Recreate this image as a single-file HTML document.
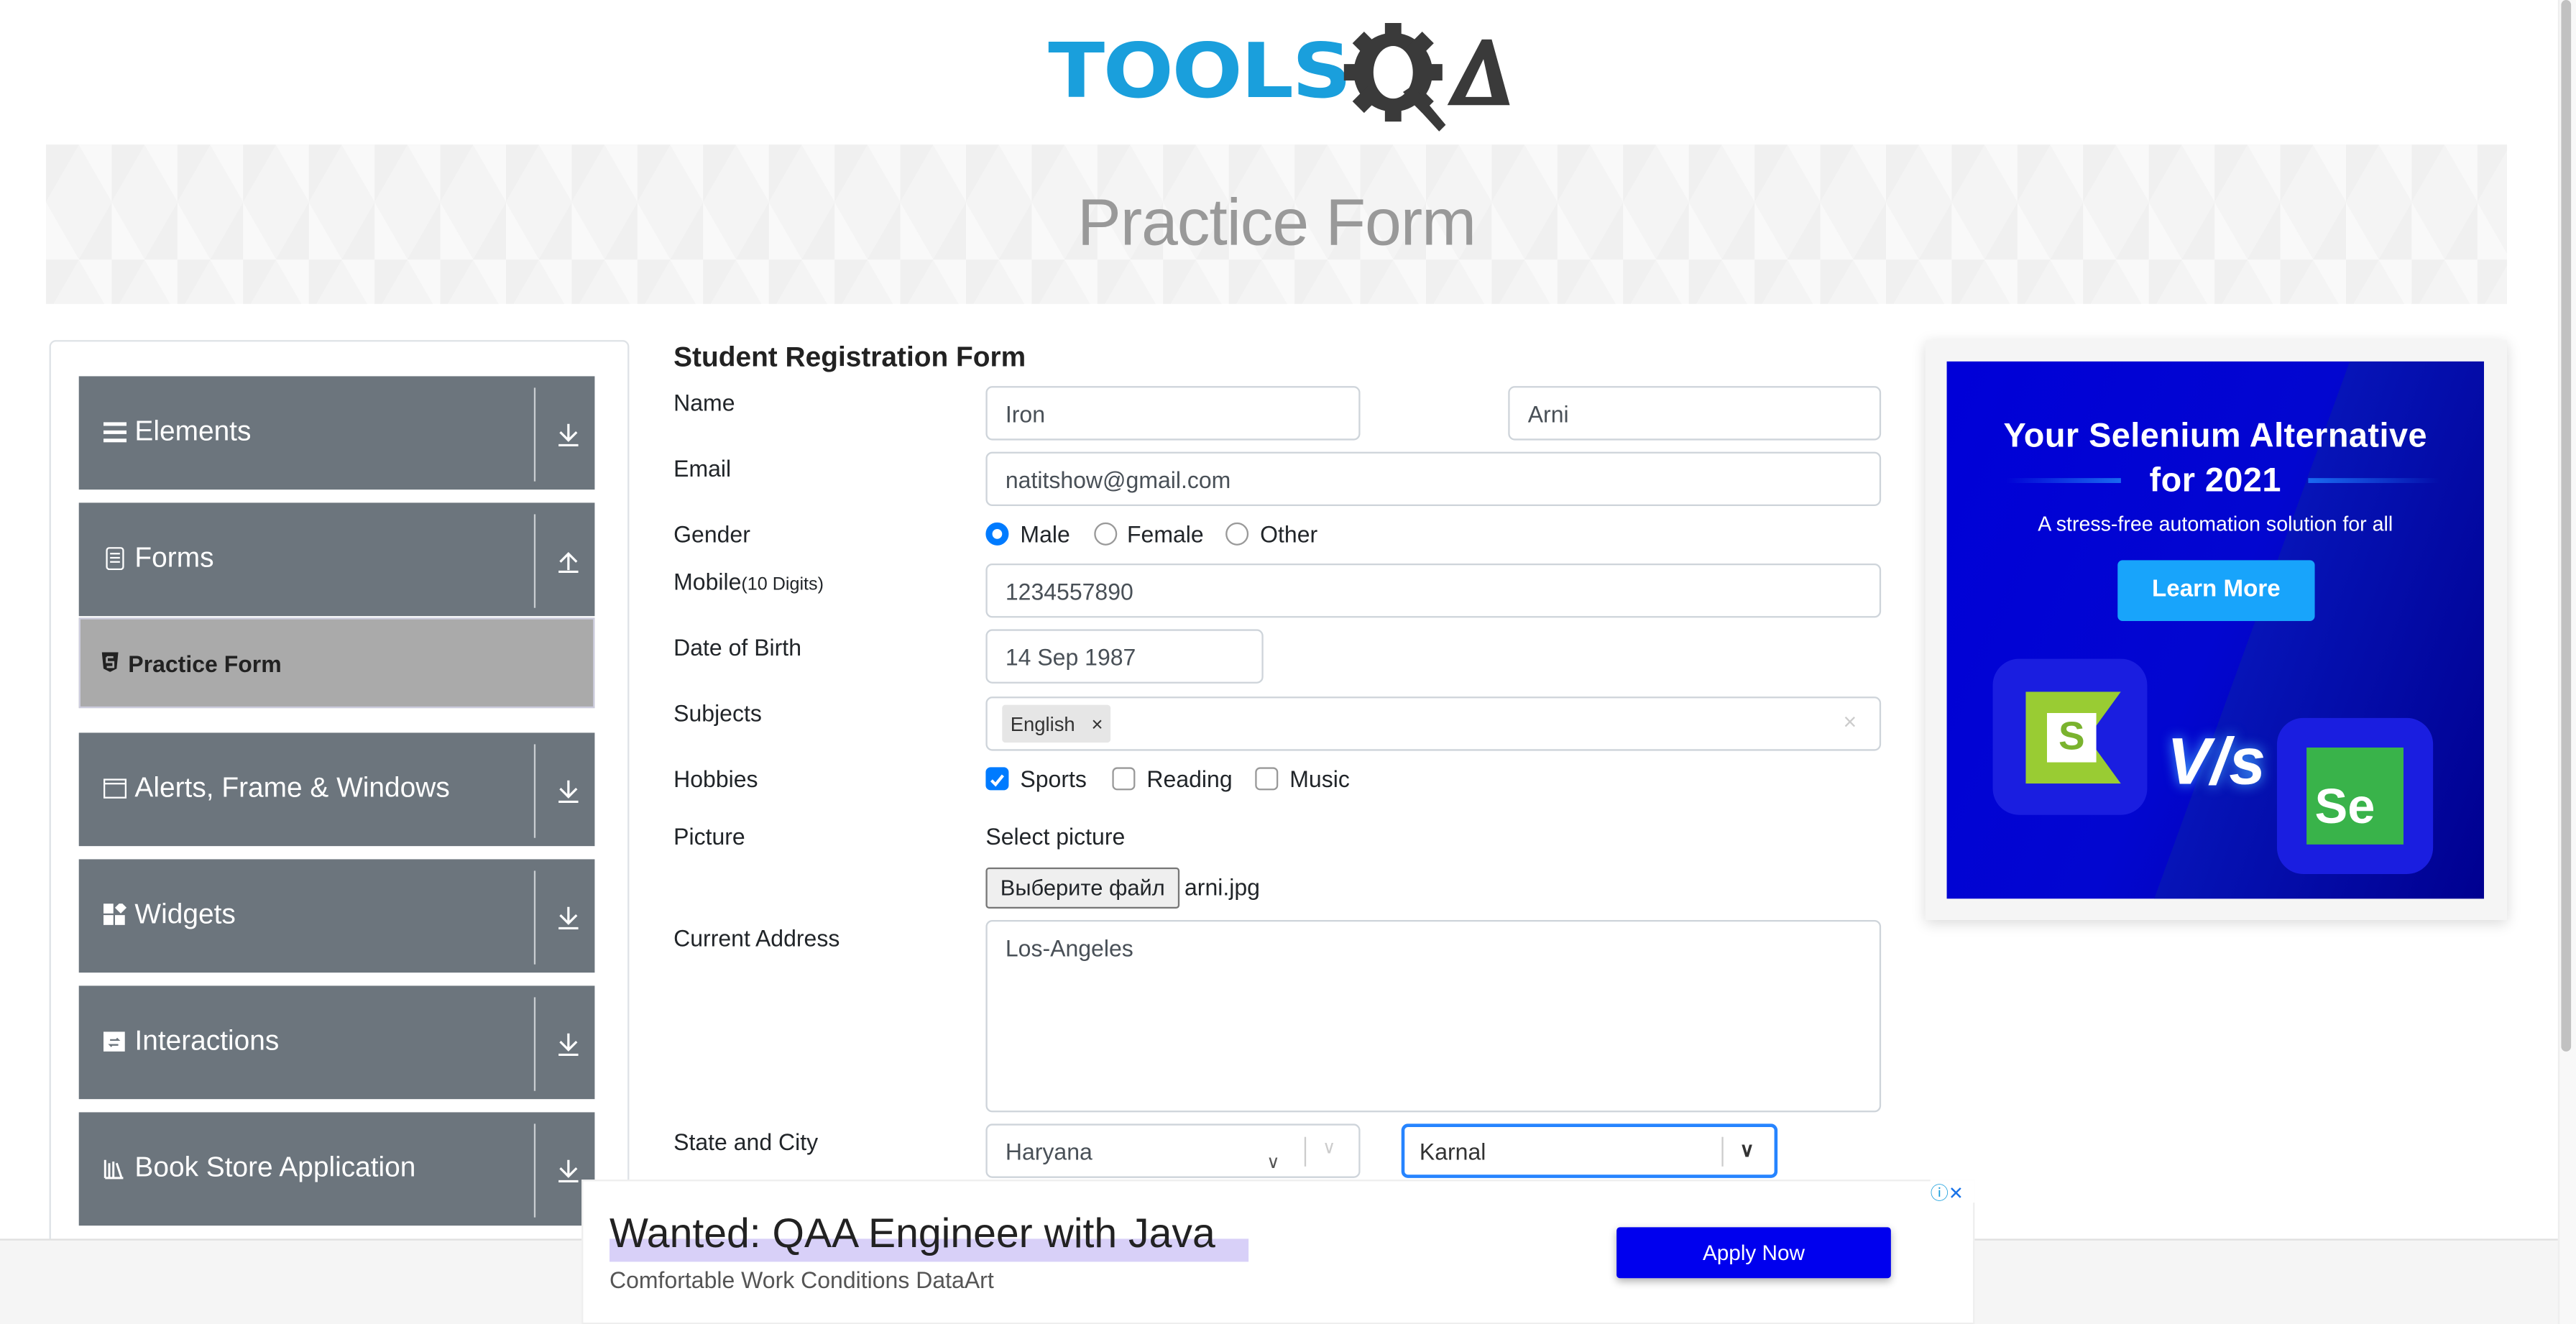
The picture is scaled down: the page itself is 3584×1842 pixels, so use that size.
<!DOCTYPE html>
<html><head><meta charset="utf-8">
<style>
*{box-sizing:border-box;margin:0;padding:0}
html,body{width:3584px;height:1842px;overflow:hidden;background:#fff}
#w{position:absolute;left:0;top:0;width:1568px;height:806px;transform:scale(2.2857);transform-origin:0 0;font-family:"Liberation Sans",sans-serif;color:#212529}
.a{position:absolute}
.banner{left:28px;top:88px;width:1498px;height:97px;background:#f4f4f4;background-image:linear-gradient(60deg,rgba(255,255,255,.45) 25%,transparent 25%,transparent 75%,rgba(255,255,255,.45) 75%),linear-gradient(-60deg,rgba(236,236,236,.5) 25%,transparent 25%,transparent 75%,rgba(236,236,236,.5) 75%);background-size:40px 70px}
.banner h1{text-align:center;font-weight:400;font-size:40px;color:#999;line-height:97px;letter-spacing:-.5px}
.side{left:30px;top:207px;width:353px;height:560px;border:1px solid #dee2e6;border-radius:4px}
.it{position:absolute;left:48px;width:314px;height:69px;background:#6c757d;color:#fff;font-size:17px}
.it span.t{position:absolute;left:34px;top:24px}
.it .ic{position:absolute;left:15px;top:27px;width:14px;height:14px}
.it .sep{position:absolute;left:277px;top:7px;width:1px;height:57px;background:#c9cdd1}
.it .ar{position:absolute;left:291px;top:27px;width:14px;height:16px}
.lbl{position:absolute;left:410px;font-size:14px}
.in{position:absolute;height:33px;border:1px solid #ced4da;border-radius:4px;font-size:14px;padding:8px 11px;color:#495057;background:#fff}
.rb{position:absolute;width:14px;height:14px;border:1px solid #999;border-radius:50%;background:#fff}
.cb{position:absolute;width:14px;height:14px;border:1px solid #999;border-radius:3px;background:#fff}
.tx{position:absolute;font-size:14px}
</style></head><body><div id="w">
<div class="a" style="left:638px;top:20px;font-family:'DejaVu Sans',sans-serif;font-weight:bold;font-size:46px;color:#1a9fdc;letter-spacing:-1px;line-height:46px;transform:scaleX(1.1);transform-origin:0 0">TOOLS</div>
<svg class="a" style="left:818px;top:14px" width="102" height="66" viewBox="0 0 102 66">
<g fill="#3a3a3a"><circle cx="30" cy="30" r="24"/>
<rect x="25" y="0" width="10" height="60"/><rect x="0" y="25" width="60" height="10"/>
<rect x="25" y="0" width="10" height="60" transform="rotate(45 30 30)"/><rect x="25" y="0" width="10" height="60" transform="rotate(-45 30 30)"/></g>
<ellipse cx="30" cy="30" rx="12" ry="16" fill="#fff"/>
<path d="M36 42 L58 66 L62 62 L42 38Z" fill="#3a3a3a"/>
<path d="M63 50 L84 10 L90 10 L101 50Z" fill="#3a3a3a"/>
<path d="M74 45 L85 22 L90 45Z" fill="#fff"/>
</svg>
<div class="a banner"><h1>Practice Form</h1></div>
<div class="a side"></div>
<div class="it" style="top:229px"><svg class="ic" viewBox="0 0 14 14"><rect y="1" width="14" height="2.2" fill="#fff"/><rect y="6" width="14" height="2.2" fill="#fff"/><rect y="11" width="14" height="2.2" fill="#fff"/></svg><span class="t">Elements</span><div class="sep"></div><svg class="ar" viewBox="0 0 14 16"><path d="M7 2V12M2 7L7 12L12 7M1 15H13" stroke="#fff" stroke-width="1.4" fill="none"/></svg></div>
<div class="it" style="top:306px"><svg class="ic" viewBox="0 0 14 14"><rect x="2" y="0.5" width="10" height="13" rx="1.5" stroke="#fff" fill="none"/><path d="M4 4H10M4 6.5H10M4 9H10" stroke="#fff"/></svg><span class="t">Forms</span><div class="sep"></div><svg class="ar" viewBox="0 0 14 16"><path d="M7 14V4M2 9L7 4L12 9M1 15H13" stroke="#fff" stroke-width="1.4" fill="none"/></svg></div>
<div class="a" style="left:48px;top:376px;width:314px;height:55px;background:#aaa;border:1px solid #ccd"></div>
<svg class="a" style="left:62px;top:397px" width="10" height="12" viewBox="0 0 10 12"><path d="M0 0H10L9 10L5 12L1 10Z" fill="#222"/><path d="M3 3H7M3 3V6H7V9H3" stroke="#aaa" stroke-width="1.2" fill="none"/></svg>
<div class="a" style="left:78px;top:396px;font-size:14px;font-weight:bold;color:#222">Practice Form</div>
<div class="it" style="top:446px"><svg class="ic" viewBox="0 0 14 14"><rect x="0.5" y="1.5" width="13" height="11" stroke="#fff" fill="none"/><path d="M0.5 4H13.5" stroke="#fff"/></svg><span class="t">Alerts, Frame &amp; Windows</span><div class="sep"></div><svg class="ar" viewBox="0 0 14 16"><path d="M7 2V12M2 7L7 12L12 7M1 15H13" stroke="#fff" stroke-width="1.4" fill="none"/></svg></div>
<div class="it" style="top:523px"><svg class="ic" viewBox="0 0 14 14"><rect x="0" y="7" width="6" height="6" fill="#fff"/><rect x="7" y="7" width="6" height="6" fill="#fff"/><rect x="0" y="0" width="6" height="6" fill="#fff"/><rect x="8" y="0" width="5" height="5" fill="#fff" transform="rotate(45 10.5 2.5)"/></svg><span class="t">Widgets</span><div class="sep"></div><svg class="ar" viewBox="0 0 14 16"><path d="M7 2V12M2 7L7 12L12 7M1 15H13" stroke="#fff" stroke-width="1.4" fill="none"/></svg></div>
<div class="it" style="top:600px"><svg class="ic" viewBox="0 0 14 14"><rect x="0" y="1" width="13" height="12" fill="#fff"/><path d="M4 6H9L8 5M9 9H4L5 10" stroke="#6c757d" fill="none"/></svg><span class="t">Interactions</span><div class="sep"></div><svg class="ar" viewBox="0 0 14 16"><path d="M7 2V12M2 7L7 12L12 7M1 15H13" stroke="#fff" stroke-width="1.4" fill="none"/></svg></div>
<div class="it" style="top:677px"><svg class="ic" viewBox="0 0 14 14"><path d="M1 2V13M3.5 4V13M6 3V13M8 4L11 13M12 13H1" stroke="#fff" stroke-width="1.3" fill="none"/></svg><span class="t">Book Store Application</span><div class="sep"></div><svg class="ar" viewBox="0 0 14 16"><path d="M7 2V12M2 7L7 12L12 7M1 15H13" stroke="#fff" stroke-width="1.4" fill="none"/></svg></div>

<div class="a" style="left:410px;top:208px;font-size:17px;font-weight:bold;color:#222">Student Registration Form</div>
<div class="lbl" style="top:237px">Name</div>
<div class="in" style="left:600px;top:235px;width:228px">Iron</div>
<div class="in" style="left:918px;top:235px;width:227px">Arni</div>
<div class="lbl" style="top:277px">Email</div>
<div class="in" style="left:600px;top:275px;width:545px">natitshow@gmail.com</div>
<div class="lbl" style="top:317px">Gender</div>
<div class="rb" style="left:600px;top:318px;border:4px solid #007bff"></div><div class="tx" style="left:621px;top:317px">Male</div>
<div class="rb" style="left:666px;top:318px"></div><div class="tx" style="left:686px;top:317px">Female</div>
<div class="rb" style="left:746px;top:318px"></div><div class="tx" style="left:767px;top:317px">Other</div>
<div class="lbl" style="top:346px">Mobile<span style="font-size:11px">(10 Digits)</span></div>
<div class="in" style="left:600px;top:343px;width:545px">1234557890</div>
<div class="lbl" style="top:386px">Date of Birth</div>
<div class="in" style="left:600px;top:383px;width:169px">14 Sep 1987</div>
<div class="lbl" style="top:426px">Subjects</div>
<div class="in" style="left:600px;top:424px;width:545px;padding:0"></div>
<div class="a" style="left:610px;top:429px;width:66px;height:23px;background:#e6e6e6;border-radius:2px;font-size:12px;padding:5px 5px;color:#333">English&nbsp;&nbsp;&nbsp;×</div>
<div class="a" style="left:1122px;top:431px;font-size:14px;color:#ccc">×</div>
<div class="lbl" style="top:466px">Hobbies</div>
<div class="cb" style="left:600px;top:467px;background:#007bff;border-color:#007bff"><svg width="12" height="12" viewBox="0 0 12 12"><path d="M2.5 6L5 8.5L9.5 3" stroke="#fff" stroke-width="1.8" fill="none"/></svg></div><div class="tx" style="left:621px;top:466px">Sports</div>
<div class="cb" style="left:677px;top:467px"></div><div class="tx" style="left:698px;top:466px">Reading</div>
<div class="cb" style="left:764px;top:467px"></div><div class="tx" style="left:785px;top:466px">Music</div>
<div class="lbl" style="top:501px">Picture</div>
<div class="tx" style="left:600px;top:501px">Select picture</div>
<div class="a" style="left:600px;top:528px;width:118px;height:25px;background:#efefef;border:1px solid #767676;border-radius:2px;font-size:13.5px;text-align:center;line-height:23px">Выберите файл</div>
<div class="tx" style="left:721px;top:532px">arni.jpg</div>
<div class="lbl" style="top:563px">Current Address</div>
<div class="in" style="left:600px;top:560px;width:545px;height:117px">Los-Angeles</div>
<div class="lbl" style="top:687px">State and City</div>
<div class="in" style="left:600px;top:684px;width:228px">Haryana</div>
<div class="a" style="left:794px;top:692px;width:1px;height:18px;background:#ccc"></div>
<div class="a" style="left:805px;top:692px;font-size:11px;color:#ccc">&#8744;</div>
<div class="a" style="left:771px;top:701px;font-size:11px;color:#555">&#8744;</div>
<div class="in" style="left:853px;top:684px;width:229px;border:2px solid #2684ff;padding:7px 9px;color:#333">Karnal</div>
<div class="a" style="left:1048px;top:692px;width:1px;height:18px;background:#ccc"></div>
<div class="a" style="left:1059px;top:693px;font-size:12px;color:#333;font-weight:bold">&#8744;</div>

<div class="a" style="left:1172px;top:207px;width:354px;height:353px;background:#f5f5f5;box-shadow:0 2px 8px rgba(0,0,0,.15)"></div>
<div class="a" style="left:1185px;top:220px;width:327px;height:327px;background:linear-gradient(115deg,#0000d8 0%,#0206d0 50%,#00009a 100%);overflow:hidden">
<div class="a" style="left:0;top:0;width:327px;height:327px;background:linear-gradient(110deg,transparent 55%,#0614b8 55%,#000090 100%)"></div>
<div class="a" style="left:0;top:32px;width:327px;text-align:center;color:#fff;font-weight:bold;font-size:20.5px;line-height:27px;letter-spacing:.2px">Your Selenium Alternative<br>for 2021</div>
<div class="a" style="left:36px;top:71px;width:70px;height:3px;background:linear-gradient(90deg,transparent,#1a6af0)"></div>
<div class="a" style="left:220px;top:71px;width:80px;height:3px;background:linear-gradient(90deg,#1a6af0,transparent)"></div>
<div class="a" style="left:0;top:92px;width:327px;text-align:center;color:#fff;font-size:12.5px">A stress-free automation solution for all</div>
<div class="a" style="left:104px;top:121px;width:120px;height:37px;background:#18a4fb;border-radius:3px;color:#fff;font-weight:bold;font-size:14.5px;text-align:center;line-height:37px">Learn More</div>
<div class="a" style="left:28px;top:181px;width:94px;height:95px;background:#1a1ee0;border-radius:16px"></div>
<div class="a" style="left:48px;top:201px;width:58px;height:56px;background:#99cc33;clip-path:polygon(0 0,100% 0,65% 50%,100% 100%,0 100%)"></div>
<div class="a" style="left:61px;top:214px;width:30px;height:30px;background:#fff;color:#7ab32e;font-weight:bold;font-size:24px;text-align:center;line-height:30px">S</div>
<div class="a" style="left:134px;top:222px;color:#fff;font-weight:bold;font-size:40px;font-style:italic;text-shadow:0 0 8px #4af">V/s</div>
<div class="a" style="left:201px;top:217px;width:95px;height:95px;background:#1a1ee0;border-radius:16px"></div>
<div class="a" style="left:219px;top:235px;width:59px;height:59px;background:#39b34a;color:#fff;font-weight:bold;font-size:30px;padding:20px 0 0 5px">Se</div>
</div>

<div class="a" style="left:0;top:754px;width:1568px;height:52px;background:#f5f5f5;border-top:1px solid #e0e0e0"></div>
<div class="a" style="left:1557px;top:0;width:11px;height:806px;background:#f8f8f8;border-left:1px solid #eee"></div>
<div class="a" style="left:1559px;top:0;width:6px;height:640px;background:#c1c1c1;border-radius:3px"></div>
<div class="a" style="left:354px;top:718px;width:848px;height:88px;background:#fff;border:1px solid #eee"></div>
<div class="a" style="left:1175px;top:718px;width:27px;height:14px;font-size:11px;color:#1a9fdc;background:#fff">&#9432;<span style="color:#1a73e8">✕</span></div>
<div class="a" style="left:371px;top:754px;width:389px;height:14px;background:#d8d0f8"></div>
<div class="a" style="left:371px;top:737px;font-size:25px;color:#222">Wanted: QAA Engineer with Java</div>
<div class="a" style="left:371px;top:771px;font-size:14px;color:#555">Comfortable Work Conditions DataArt</div>
<div class="a" style="left:984px;top:747px;width:167px;height:31px;background:#0000ee;border-radius:2px;color:#fff;font-size:13px;text-align:center;line-height:31px;box-shadow:0 2px 5px rgba(0,0,0,.3)">Apply Now</div>
</div></body></html>
